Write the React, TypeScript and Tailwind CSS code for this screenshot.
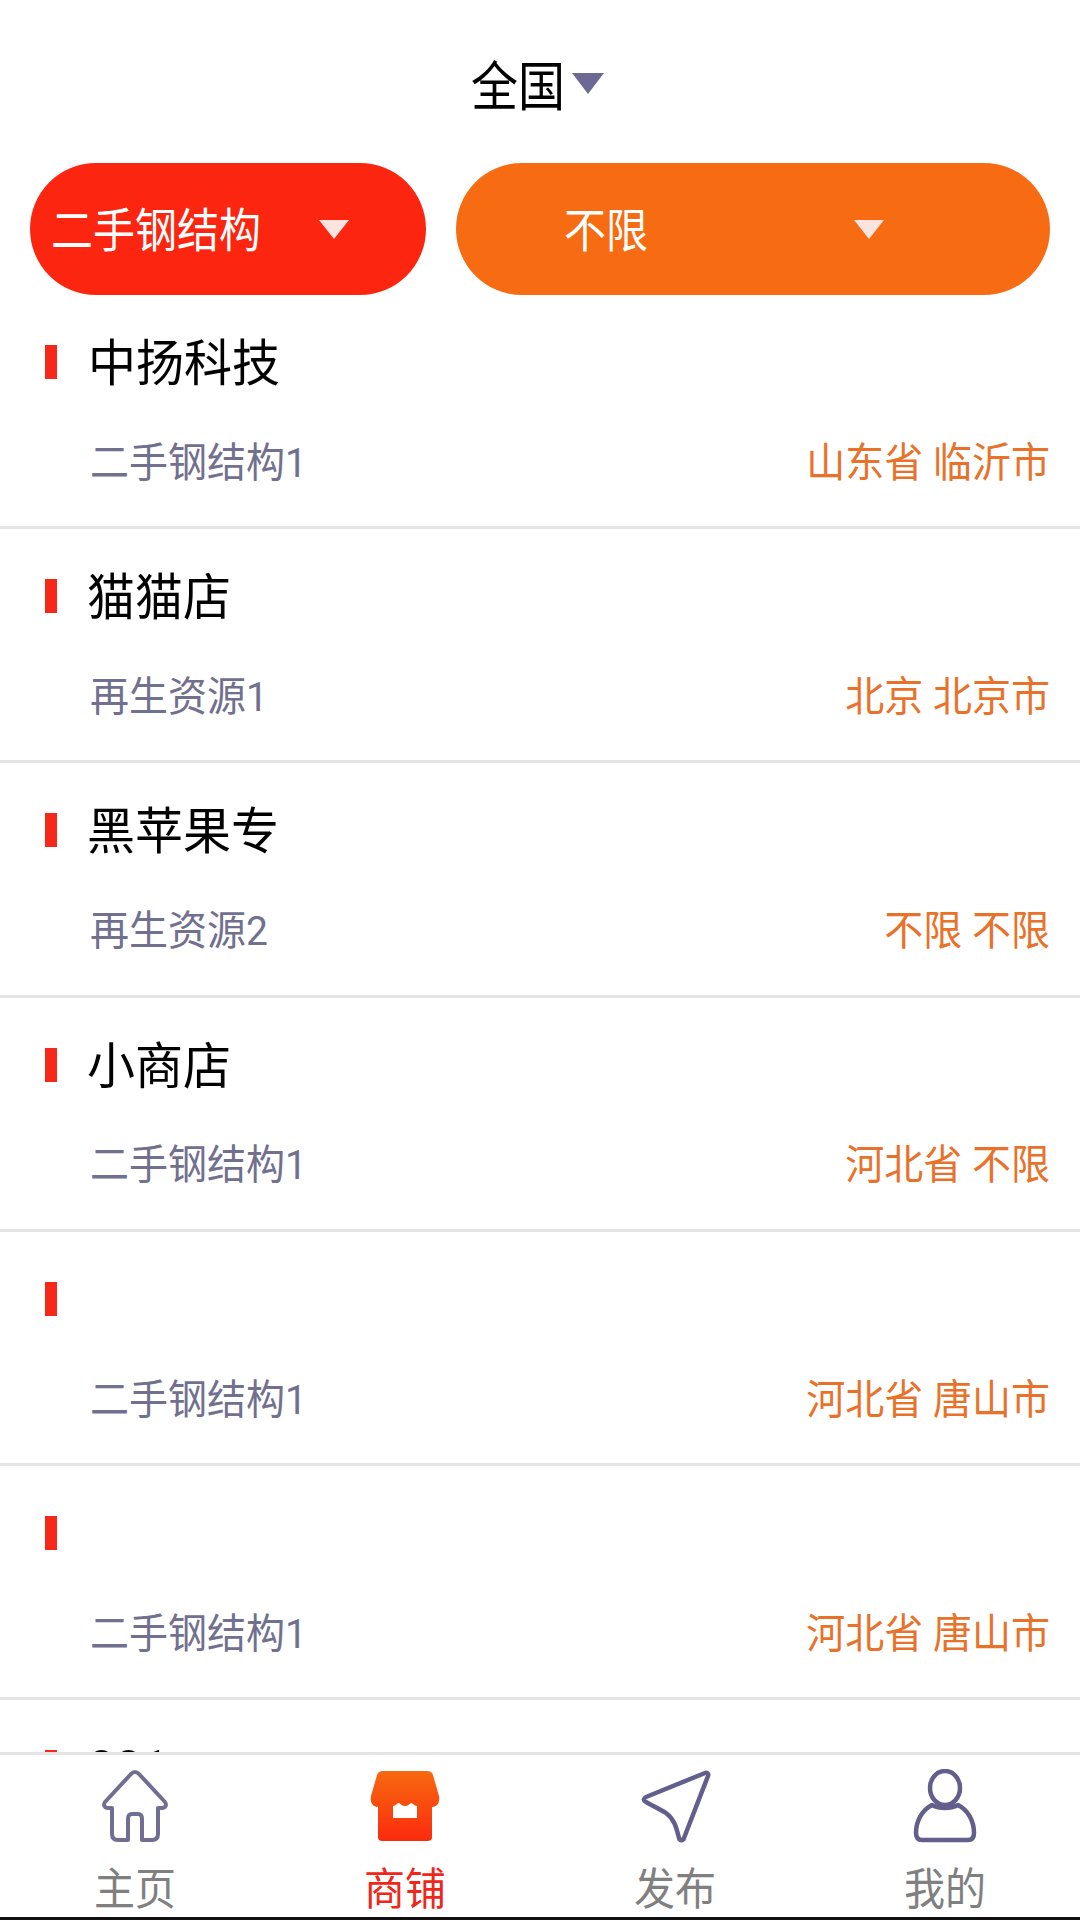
const rows = [
  { name: "中扬科技", cat: "二手钢结构1", loc: "山东省 临沂市", nameMl: "ml-[31px]" },
  { name: "猫猫店", cat: "再生资源1", loc: "北京 北京市", nameMl: "ml-[30px]" },
  { name: "黑苹果专", cat: "再生资源2", loc: "不限 不限", nameMl: "ml-[30px]" },
  { name: "小商店", cat: "二手钢结构1", loc: "河北省 不限", nameMl: "ml-[30px]" },
  { name: "", cat: "二手钢结构1", loc: "河北省 唐山市", nameMl: "ml-[30px]" },
  { name: "", cat: "二手钢结构1", loc: "河北省 唐山市", nameMl: "ml-[30px]" },
  { name: "001", cat: "二手钢结构1", loc: "河北省 唐山市", nameMl: "ml-[31px]" },
];

function Caret({ className }: { className: string }) {
  return (
    <svg className={className} viewBox="0 0 30 20" preserveAspectRatio="none">
      <path d="M0 0H30L15 20Z" fill="currentColor" />
    </svg>
  );
}

function NavItem({ label, active, children }: { label: string; active?: boolean; children: React.ReactNode }) {
  return (
    <div className="flex-1 flex flex-col items-center">
      <div className="h-[74px] w-[74px] mt-[14px] shrink-0">{children}</div>
      <span className={`text-[41px] leading-[54px] mt-[20px] scale-y-[1.08] ${active ? "text-[#f0261a]" : "text-[#808080]"}`}>{label}</span>
    </div>
  );
}

export default function App() {
  return (
    <div className="w-[1080px] h-[1920px] bg-white flex flex-col overflow-hidden font-['Roboto','Noto_Sans_CJK_SC',sans-serif]">
      <div className="h-[163px] shrink-0 flex items-start justify-center pt-[56px]">
        <span className="text-[47px] leading-[64px] text-black ml-[-5px] scale-y-[1.14]">全国</span>
        <Caret className="w-[32px] h-[21px] mt-[17px] ml-[7px] text-[#6c6a94]" />
      </div>
      <div className="h-[132px] shrink-0 flex gap-[30px] px-[30px] text-white text-[42px]">
        <div className="w-[396px] rounded-[66px] bg-[#fb2510] flex items-center pl-[21px]">
          <span className="w-[268px] mt-[4px] scale-y-[1.1] origin-center">二手钢结构</span>
          <Caret className="w-[30px] h-[19px] text-[#fbe4e0]" />
        </div>
        <div className="w-[594px] rounded-[66px] bg-[#f76b12] flex items-center pl-[108px]">
          <span className="w-[290px] mt-[4px] scale-y-[1.1] origin-center">不限</span>
          <Caret className="w-[30px] h-[19px] text-[#fbe4e0]" />
        </div>
      </div>
      <div className="flex-1 min-h-0 overflow-hidden">
        {rows.map((r, i) => (
          <div key={i} className="h-[234.2px] border-b-[3px] border-[#e4e4e4] flex flex-col px-[30px]">
            <div className="h-[138px] shrink-0 flex items-center">
              <div className="w-[12px] h-[34px] ml-[15px] bg-[#f5281a] mt-[-4px]" />
              <span className={`${r.nameMl} text-[48px] leading-[64px] text-black scale-y-[1.04]`}>{r.name}</span>
            </div>
            <div className="flex justify-between items-center h-[90px] shrink-0 mt-[-15px] text-[39px]">
              <span className="ml-[60px] text-[#71708f] scale-y-[1.06]">{r.cat}</span>
              <span className="text-[#e8722a] scale-y-[1.06]">{r.loc}</span>
            </div>
          </div>
        ))}
      </div>
      <div className="h-[165px] shrink-0 bg-white border-t-[3px] border-[#e4e4e4] flex">
        <NavItem label="主页">
          <svg viewBox="0 0 74 74" fill="none" stroke="#706f93" strokeWidth="4" strokeLinejoin="round" strokeLinecap="round" className="w-full h-full">
            <path d="M37 3C35.5 3 34 4 33 5L7 33C5 36 6.5 39 10 39H14V65C14 69 16 71 20 71H30V50C30 46 32 45 34 45H40C42 45 44 46 44 50V71H54C58 71 60 69 60 65V39H64C67.5 39 69 36 67 33L41 5C40 4 38.5 3 37 3Z" />
          </svg>
        </NavItem>
        <NavItem label="商铺" active>
          <svg viewBox="0 0 74 74" className="w-full h-full">
            <defs>
              <linearGradient id="shop" x1="0" y1="0" x2="0" y2="1">
                <stop offset="0" stopColor="#f7690f" />
                <stop offset="1" stopColor="#fb2b0e" />
              </linearGradient>
            </defs>
            <path d="M15 2H59C62 2 64 3 65 6L71 27C72 33 70 37 65 38H64V68C64 71 62 72 59 72H15C12 72 10 71 10 68V38H9C4 37 2 33 3 27L9 6C10 3 12 2 15 2Z" fill="url(#shop)" />
            <path d="M25 37C28 37 29 34 31 34C33 35 34 37 37 37C40 37 41 35 43 34C45 34 46 37 49 37V49H25Z" fill="#fff" />
          </svg>
        </NavItem>
        <NavItem label="发布">
          <svg viewBox="0 0 74 74" fill="none" stroke="#625f8c" strokeWidth="4.5" strokeLinejoin="round" strokeLinecap="round" className="w-full h-full">
            <path d="M67 4C69 3 71 5 70 7L46 69C45 72 42 72 41 69C38 57 36 50 28 44C22 40 15 37 8 33C5 31 5 30 8 28Z" />
          </svg>
        </NavItem>
        <NavItem label="我的">
          <svg viewBox="0 0 74 74" fill="none" stroke="#625f8c" strokeWidth="4.5" className="w-full h-full">
            <ellipse cx="37" cy="19" rx="15" ry="17" />
            <path d="M24 36C14 41 8 52 8 64C8 69 10 71 14 71H60C64 71 66 69 66 64C66 52 60 41 50 36C42 40 32 40 24 36Z" strokeLinejoin="round" />
          </svg>
        </NavItem>
      </div>
      <div className="h-[3px] shrink-0 bg-[#111]" />
    </div>
  );
}
